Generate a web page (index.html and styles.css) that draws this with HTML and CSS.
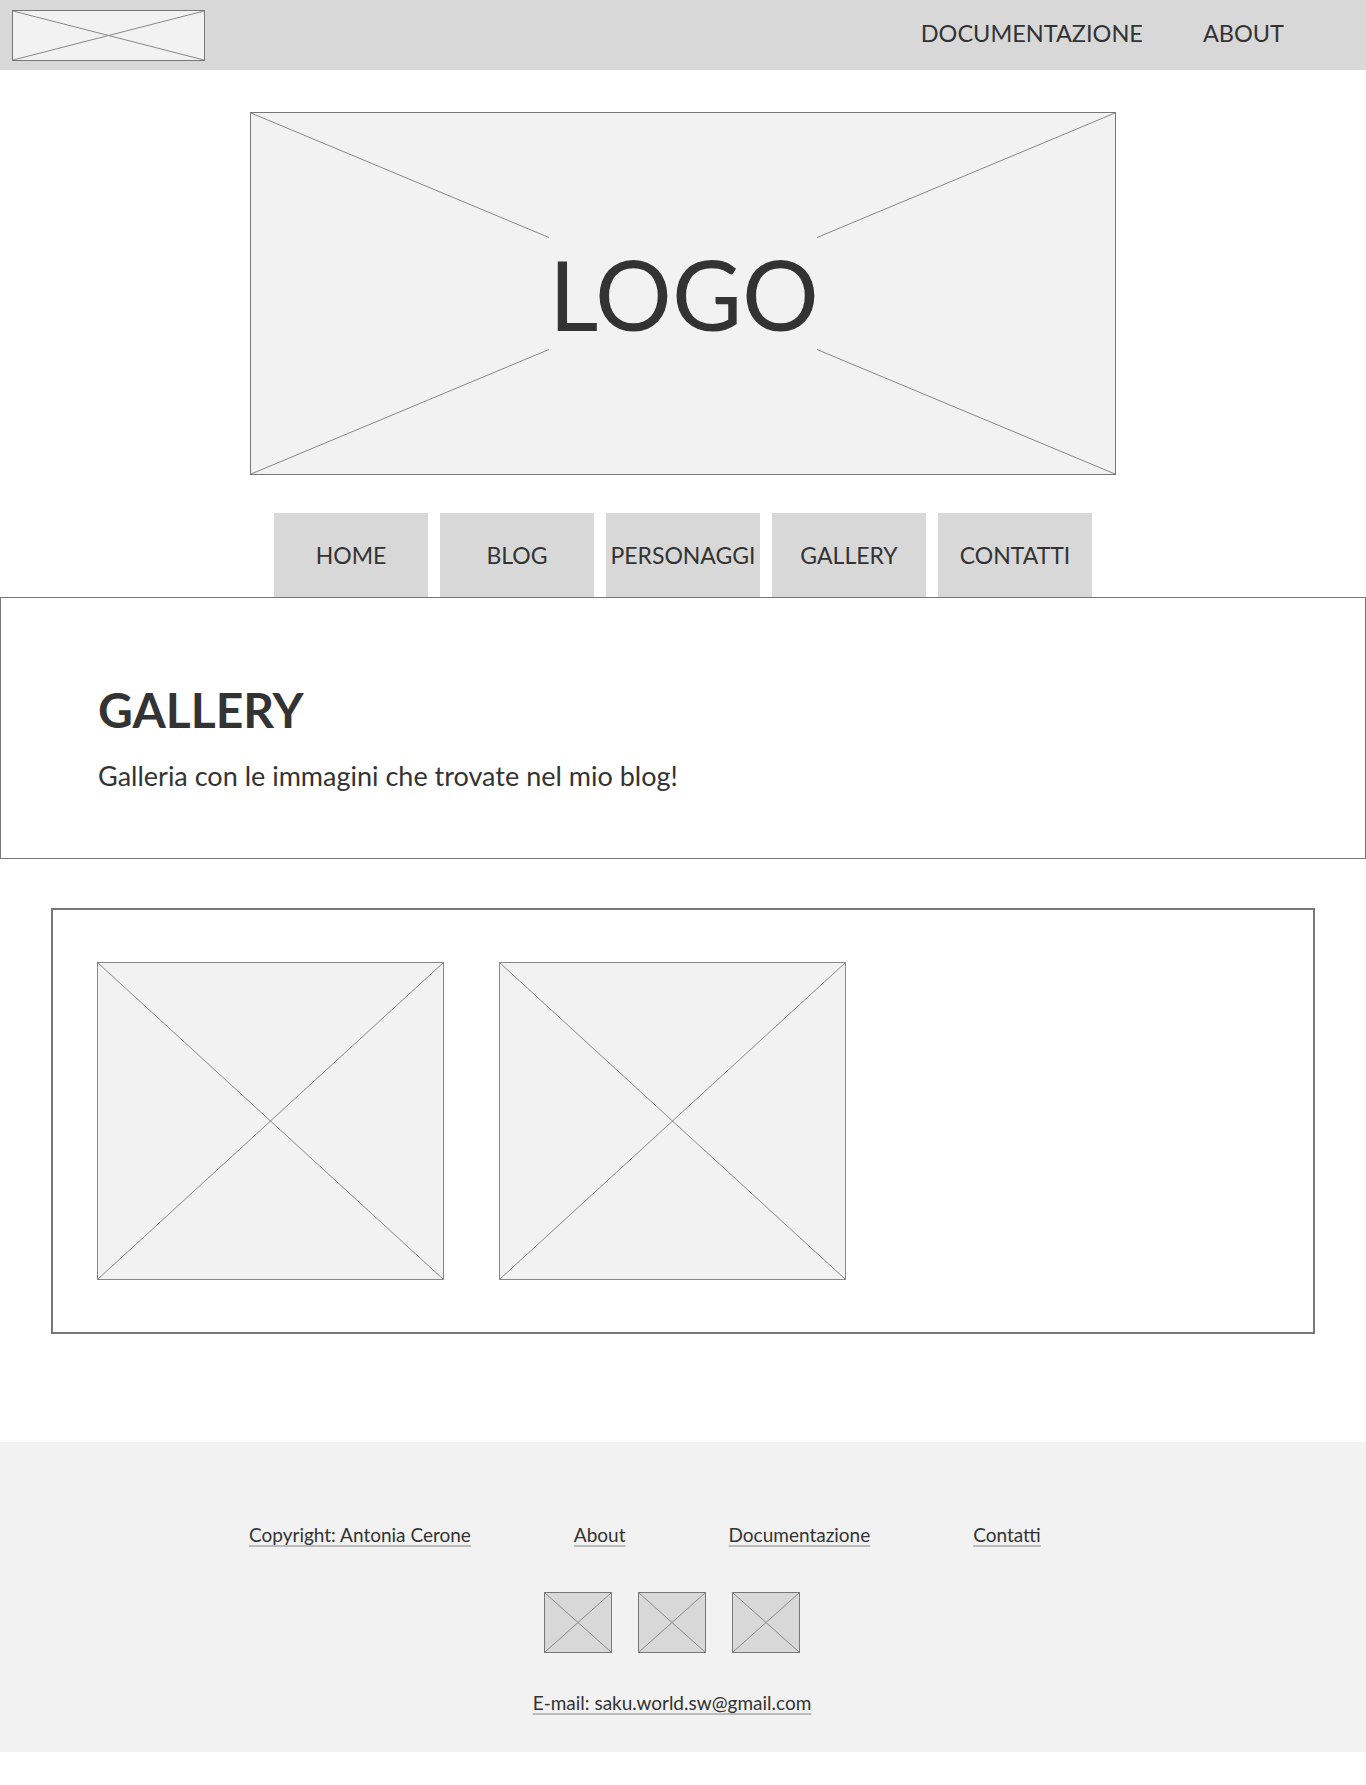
FILE: index.html
```html
<!DOCTYPE html>
<html lang="it">
<head>
  <meta charset="UTF-8" />
  <meta name="viewport" content="width=device-width, initial-scale=1.0" />
  <title>Gallery</title>
  <link rel="stylesheet" href="styles.css">
</head>
<body>
  <header class="topbar">
    <div class="mini-logo">
      <svg viewBox="0 0 100 100" preserveAspectRatio="none">
        <line x1="0" y1="0" x2="100" y2="100" />
        <line x1="100" y1="0" x2="0" y2="100" />
      </svg>
    </div>
    <nav class="top-links">
      <a href="#">DOCUMENTAZIONE</a>
      <a href="#">ABOUT</a>
    </nav>
  </header>

  <div class="logo">
    <svg viewBox="0 0 100 100" preserveAspectRatio="none">
      <line x1="0" y1="0" x2="100" y2="100" />
      <line x1="100" y1="0" x2="0" y2="100" />
    </svg>
    <span class="logo-text">LOGO</span>
  </div>

  <nav class="menu">
    <a href="#">HOME</a>
    <a href="#">BLOG</a>
    <a href="#">PERSONAGGI</a>
    <a href="#">GALLERY</a>
    <a href="#">CONTATTI</a>
  </nav>

  <section class="intro">
    <h1>GALLERY</h1>
    <p>Galleria con le immagini che trovate nel mio blog!</p>
  </section>

  <section class="gallery">
    <div class="photo">
      <svg viewBox="0 0 100 100" preserveAspectRatio="none">
        <line x1="0" y1="0" x2="100" y2="100" />
        <line x1="100" y1="0" x2="0" y2="100" />
      </svg>
    </div>
    <div class="photo">
      <svg viewBox="0 0 100 100" preserveAspectRatio="none">
        <line x1="0" y1="0" x2="100" y2="100" />
        <line x1="100" y1="0" x2="0" y2="100" />
      </svg>
    </div>
  </section>

  <footer class="footer">
    <div class="footer-links">
      <a href="#">Copyright: Antonia Cerone</a>
      <a href="#">About</a>
      <a href="#">Documentazione</a>
      <a href="#">Contatti</a>
    </div>
    <div class="social">
      <div class="icon">
        <svg viewBox="0 0 100 100" preserveAspectRatio="none">
          <line x1="0" y1="0" x2="100" y2="100" />
          <line x1="100" y1="0" x2="0" y2="100" />
        </svg>
      </div>
      <div class="icon">
        <svg viewBox="0 0 100 100" preserveAspectRatio="none">
          <line x1="0" y1="0" x2="100" y2="100" />
          <line x1="100" y1="0" x2="0" y2="100" />
        </svg>
      </div>
      <div class="icon">
        <svg viewBox="0 0 100 100" preserveAspectRatio="none">
          <line x1="0" y1="0" x2="100" y2="100" />
          <line x1="100" y1="0" x2="0" y2="100" />
        </svg>
      </div>
    </div>
    <a class="mail" href="#">E-mail: saku.world.sw@gmail.com</a>
  </footer>
</body>
</html>
```

FILE: styles.css
```css
body {
  margin: 0;
  padding-bottom: 34px;
  font-family: Lato, "Open Sans", sans-serif;
  color: #333;
  background: #fff;
}
a {
  color: #333;
  text-decoration: none;
}
svg {
  display: block;
  width: 100%;
  height: 100%;
}
svg line {
  stroke: #888;
  stroke-width: 1;
  vector-effect: non-scaling-stroke;
}

/* barra in alto */
.topbar {
  height: 70px;
  background: #d8d8d8;
  display: flex;
  align-items: center;
  justify-content: space-between;
  padding: 0 82px 0 12px;
}
.mini-logo {
  width: 193px;
  height: 51px;
  box-sizing: border-box;
  border: 1px solid #777;
  background: #f2f2f2;
}
.top-links {
  display: flex;
  gap: 60px;
  padding-bottom: 5px;
}
.top-links a {
  font-size: 23.5px;
}

/* logo grande */
.logo {
  position: relative;
  width: 866px;
  height: 363px;
  margin: 42px auto 0;
  box-sizing: border-box;
  border: 1px solid #777;
  background: #f2f2f2;
  display: flex;
  align-items: center;
  justify-content: center;
}
.logo svg {
  position: absolute;
  inset: 0;
}
.logo-text {
  position: relative;
  width: 268px;
  height: 113px;
  background: #f2f2f2;
  font-size: 96px;
  line-height: 113px;
  text-align: center;
}

/* menu */
.menu {
  display: flex;
  justify-content: center;
  gap: 12px;
  margin-top: 38px;
}
.menu a {
  width: 154px;
  height: 84px;
  background: #d8d8d8;
  display: flex;
  align-items: center;
  justify-content: center;
  font-size: 23px;
}

.intro {
  border: 1px solid #777;
  padding: 83px 97px 66px;
}
.intro h1 {
  margin: 0;
  font-size: 48px;
  font-weight: 700;
  line-height: 1.2;
}
.intro p {
  margin: 21px 0 0;
  font-size: 27px;
  line-height: 1.2;
}

.gallery {
  margin: 49px 51px 0;
  border: 2px solid #777;
  padding: 52px 44px;
  display: flex;
  gap: 55px;
}
.photo {
  width: 347px;
  height: 318px;
  box-sizing: border-box;
  border: 1px solid #888;
  background: #f2f2f2;
}

/* footer */
.footer {
  margin-top: 108px;
  height: 310px;
  box-sizing: border-box;
  background: #f2f2f2;
  padding-top: 81px;
  display: flex;
  flex-direction: column;
}
.footer a {
  font-size: 19px;
  line-height: 23px;
  text-decoration: underline;
  text-decoration-color: #bbb;
  text-decoration-thickness: 2px;
  text-underline-offset: 3px;
}
.footer-links {
  display: flex;
  gap: 103px;
  padding-left: 249px;
}
.social {
  display: flex;
  justify-content: center;
  gap: 26px;
  margin: 46px 22px 0 0;
}
.icon {
  width: 68px;
  height: 61px;
  box-sizing: border-box;
  border: 1px solid #777;
  background: #d8d8d8;
}
.footer .mail {
  align-self: center;
  margin: 38px 22px 0 0;
}
```
